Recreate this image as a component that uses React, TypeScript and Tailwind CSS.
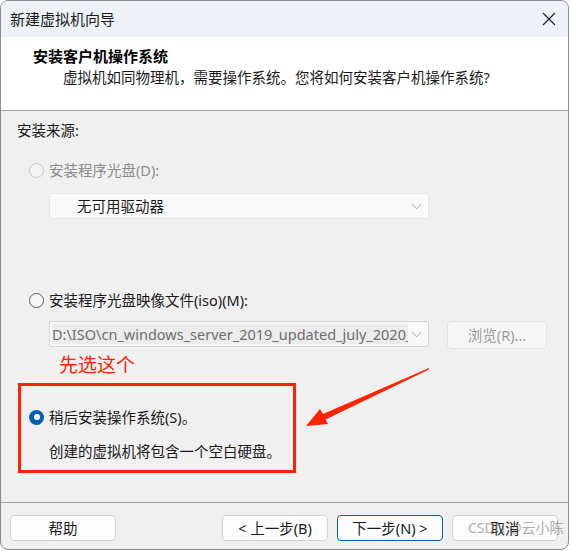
import React from "react";

const font = { fontFamily: '"Noto Sans", "Noto Sans CJK SC", sans-serif' };

// small dropdown chevron
function Chevron() {
  return (
    <svg width="11" height="7" viewBox="0 0 11 7" className="shrink-0">
      <path d="M0.5 0.8 L5.5 5.8 L10.5 0.8" fill="none" stroke="#a8a8a8" strokeWidth="1" />
    </svg>
  );
}

function Radio({ state }: { state: "disabled" | "off" | "on" }) {
  if (state === "on") {
    return (
      <span className="w-[15px] h-[15px] rounded-full bg-[#005fb8] flex items-center justify-center shrink-0">
        <span className="w-[6px] h-[6px] rounded-full bg-white" />
      </span>
    );
  }
  if (state === "off") {
    return <span className="w-[15px] h-[15px] rounded-full border border-[#5a5a5a] bg-[#f7f7f7] shrink-0" />;
  }
  return <span className="w-[15px] h-[15px] rounded-full border border-[#c4c4c4] bg-[#f4f4f4] shrink-0" />;
}

function Btn({ label, primary }: { label: string; primary?: boolean }) {
  return (
    <button
      className={
        "w-[106px] h-[26px] rounded-[4px] bg-[#fdfdfd] text-[14.5px] leading-[20px] text-[#1a1a1a] flex items-center justify-center " +
        (primary ? "border border-[#005fb8]" : "border border-[#d3d3d3]")
      }
    >
      {label}
    </button>
  );
}

export default function App() {
  return (
    <div className="w-[570px] h-[551px] bg-white relative overflow-hidden" style={font}>
      <div className="w-[569px] h-[550px] border border-[#8c8c8c] rounded-[8px] overflow-hidden flex flex-col bg-[#f0f0f0]">
        {/* title bar */}
        <div className="h-[36px] bg-[#eef2f8] flex items-center justify-between pl-[9px] pr-[12px] shrink-0">
          <span className="text-[15px] leading-[20px] text-[#1b1b1b]">新建虚拟机向导</span>
          <svg width="14" height="14" viewBox="0 0 14 14">
            <path d="M1 1 L13 13 M13 1 L1 13" stroke="#1b1b1b" strokeWidth="1.1" />
          </svg>
        </div>

        {/* header */}
        <div className="h-[74px] bg-white border-b border-[#a0a0a0] pl-[32px] pt-[9px] shrink-0">
          <div className="text-[15px] leading-[20px] font-bold text-black">安装客户机操作系统</div>
          <div className="text-[14.5px] leading-[20px] text-[#1a1a1a] ml-[30px] mt-px">
            虚拟机如同物理机，需要操作系统。您将如何安装客户机操作系统?
          </div>
        </div>

        {/* content */}
        <div className="flex-1 pl-[16px] pt-[9px] flex flex-col">
          <div className="text-[14.5px] leading-[20px] text-[#1a1a1a]">安装来源:</div>

          <div className="flex items-center gap-[5px] ml-[12px] mt-[20px] h-[20px]">
            <Radio state="disabled" />
            <span className="text-[14.5px] leading-[20px] text-[#8c8c8c]">安装程序光盘(D):</span>
          </div>
          <div className="ml-[32px] mt-[13px] w-[380px] h-[26px] bg-[#fafafa] border border-[#e6e6e6] rounded-[2px] flex items-center justify-between pl-[27px] pr-[6px]">
            <span className="text-[14.5px] leading-[20px] text-[#1a1a1a]">无可用驱动器</span>
            <Chevron />
          </div>

          <div className="flex items-center gap-[5px] ml-[12px] mt-[71px] h-[20px]">
            <Radio state="off" />
            <span className="text-[14.5px] leading-[20px] text-[#1a1a1a]">安装程序光盘映像文件(iso)(M):</span>
          </div>
          <div className="flex items-start ml-[32px] mt-[11px]">
            <div className="w-[380px] h-[26px] bg-[#f9f9f9] border border-[#d6d6d6] rounded-[2px] flex items-center justify-between pl-[2px] pr-[6px]">
              <div className="w-[356px] overflow-hidden whitespace-nowrap bg-[#ececec] text-[14.5px] leading-[20px] text-[#6e6e6e]">
                D:\ISO\cn_windows_server_2019_updated_july_2020_
              </div>
              <Chevron />
            </div>
            <div className="ml-[18px] w-[100px] h-[28px] bg-[#f6f6f6] border border-[#e4e4e4] rounded-[4px] flex items-center justify-center text-[14.5px] leading-[20px] text-[#9a9a9a]">
              浏览(R)...
            </div>
          </div>

          <div className="ml-[42px] mt-[4px] text-[19px] leading-[24px] text-[#ff2200]">先选这个</div>

          <div className="ml-px mt-[6px] w-[278px] h-[90px] border-[3px] border-[#ff2200] pl-[8px] pt-[21px]">
            <div className="flex items-center gap-[5px] h-[20px]">
              <Radio state="on" />
              <span className="text-[14.5px] leading-[20px] text-[#1a1a1a]">稍后安装操作系统(S)。</span>
            </div>
            <div className="mt-[14px] pl-[20px] text-[14.5px] leading-[20px] text-[#1a1a1a]">
              创建的虚拟机将包含一个空白硬盘。
            </div>
          </div>
        </div>

        {/* footer */}
        <div className="h-[47px] border-t border-[#a0a0a0] flex items-start pt-[12px] pl-[9px] pr-[10px] shrink-0">
          <Btn label="帮助" />
          <div className="ml-auto flex gap-[9px]">
            <Btn label="< 上一步(B)" />
            <Btn label="下一步(N) >" primary />
            <Btn label="取消" />
          </div>
        </div>
      </div>

      {/* annotation arrow */}
      <svg className="absolute left-[300px] top-[360px]" width="135" height="75" viewBox="0 0 135 75">
        <polygon points="129,8 23,54 20,49 6,66 28,64 25.5,59.5 129,9.5" fill="#ff2200" />
      </svg>

      {/* watermark */}
      <div className="absolute left-[468px] top-[518px] text-[14px] leading-[20px] text-[#7a7a7a] opacity-60 whitespace-nowrap">
        CSDN @云小陈
      </div>
    </div>
  );
}
